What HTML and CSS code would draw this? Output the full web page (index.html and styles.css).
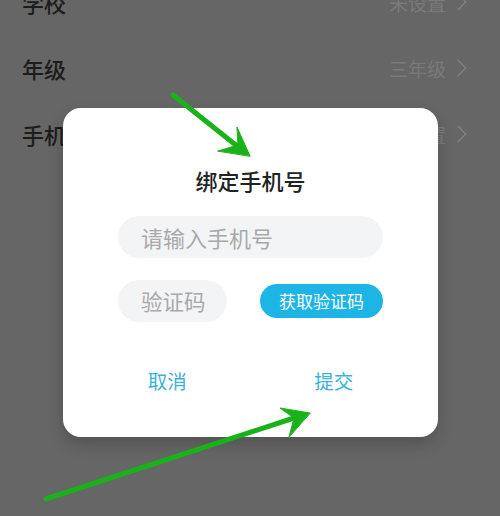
FILE: index.html
```html
<!DOCTYPE html>
<html lang="zh">
<head>
<meta charset="utf-8">
<link rel="stylesheet" href="styles.css">
</head>
<body>
<div class="list">
  <div class="row"><span class="label">学校</span><span class="value">未设置<span class="chev"></span></span></div>
  <div class="row"><span class="label">年级</span><span class="value">三年级<span class="chev"></span></span></div>
  <div class="row"><span class="label">手机号</span><span class="value">未设置<span class="chev"></span></span></div>
</div>

<div class="dialog">
  <div class="title">绑定手机号</div>
  <div class="field wide">请输入手机号</div>
  <div class="coderow">
    <div class="field short">验证码</div>
    <div class="getcode">获取验证码</div>
  </div>
  <div class="actions">
    <span class="act">取消</span>
    <span class="act">提交</span>
  </div>
</div>

<svg class="arrows" width="500" height="516" viewBox="0 0 500 516">
  <g fill="#19b219" stroke="#19b219" stroke-linecap="round" stroke-linejoin="round">
    <line x1="173" y1="95" x2="242" y2="150" stroke-width="5"/>
    <polygon points="250,156 237,127 238,145 218,151" stroke-width="1"/>
    <line x1="46" y1="499" x2="300" y2="416" stroke-width="5"/>
    <polygon points="310,413 280,408 294,418 289,437" stroke-width="1"/>
  </g>
</svg>
</body>
</html>
```
FILE: styles.css
```css
html, body {
  margin: 0;
  padding: 0;
}
body {
  width: 500px;
  height: 516px;
  overflow: hidden;
  background: #666666;
  font-family: "Noto Sans CJK SC", "Noto Sans", sans-serif;
  position: relative;
}
.list {
  margin-top: -31px;
  padding: 0 36px 0 22px;
}
.row {
  height: 66px;
  display: flex;
  align-items: center;
  justify-content: space-between;
}
.label {
  font-size: 22px;
  color: #1c1c1c;
  font-weight: 500;
}
.value {
  font-size: 19px;
  color: #7a7a7a;
  display: flex;
  align-items: center;
}
.chev {
  width: 11px;
  height: 11px;
  border-top: 1.3px solid #868686;
  border-right: 1.3px solid #868686;
  transform: rotate(45deg);
  margin-left: 6px;
  margin-right: 0;
}
.dialog {
  position: absolute;
  left: 63px;
  top: 108px;
  width: 375px;
  height: 329px;
  box-sizing: border-box;
  background: #ffffff;
  border-radius: 18px;
  box-shadow: 0 8px 16px rgba(0,0,0,0.18);
  padding: 57px 55px 0;
  display: flex;
  flex-direction: column;
}
.title {
  text-align: center;
  font-size: 22px;
  line-height: 30px;
  font-weight: 500;
  color: #222;
}
.field {
  height: 42px;
  border-radius: 21px;
  background: #f3f4f6;
  color: #a9a9a9;
  font-size: 22px;
  line-height: 42px;
  padding-left: 23px;
  box-sizing: border-box;
}
.wide {
  margin-top: 21px;
}
.coderow {
  margin-top: 22px;
  display: flex;
  align-items: center;
  justify-content: space-between;
}
.short {
  width: 109px;
  font-size: 21.5px;
}
.getcode {
  width: 123px;
  height: 34px;
  border-radius: 17px;
  background: #1cb5e6;
  color: #fff;
  font-size: 17px;
  line-height: 34px;
  text-align: center;
}
.actions {
  margin: 44px -34px 0;
  display: grid;
  grid-template-columns: 1fr 1fr;
}
.act {
  text-align: center;
  font-size: 19.5px;
  line-height: 30px;
  color: #3cb2d9;
}
.arrows {
  position: absolute;
  left: 0;
  top: 0;
}
```
